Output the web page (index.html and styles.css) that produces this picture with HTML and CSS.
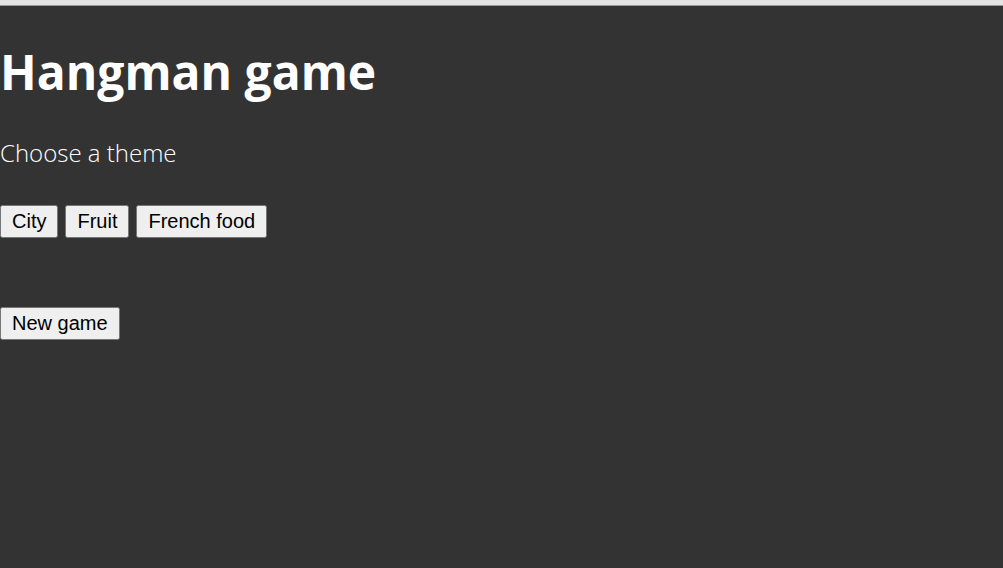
FILE: index.html
```html
<!DOCTYPE html>
<html lang="en">
<head>
    <meta charset="UTF-8">
    <meta name="viewport" content="width=device-width, initial-scale=1.0">
    <title>Hangman game</title>
    <link rel="stylesheet" href="styles.css">
</head>
<body>
    <div class="container">
        <h1 class="title">Hangman game</h1>
        <p class="sub-title">Choose a theme</p>
        <div class="themes">
            <button class="btn">City</button>
            <button class="btn">Fruit</button>
            <button class="btn">French food</button>
        </div>
        <div class="word"></div>
        <button class="btn new-game">New game</button>
    </div>
</body>
</html>
```

FILE: styles.css
```css
html {
    background-color: #333333;
}
body {
    margin: 0;
    min-height: 562px;
    background-color: #333333;
    border-top: 5px solid #e3e3e3;
    box-shadow: inset 0 1px 0 #9a9a9a;
    color: white;
    font-family: "Open Sans", sans-serif;
}
.container {
    padding-top: 34px;
}
.title {
    font-size: 48px;
    font-weight: 700;
    margin: 0 0 32px 0;
}
.sub-title {
    font-size: 24px;
    font-weight: 300;
    margin: 0 0 36px 0;
}
.themes {
    display: flex;
    gap: 7px;
}
.btn {
    font-family: Arial, "Liberation Sans", sans-serif;
    font-size: 20px;
    padding: 3px 10px;
    color: black;
}
.word {
    height: 69px;
}
```
